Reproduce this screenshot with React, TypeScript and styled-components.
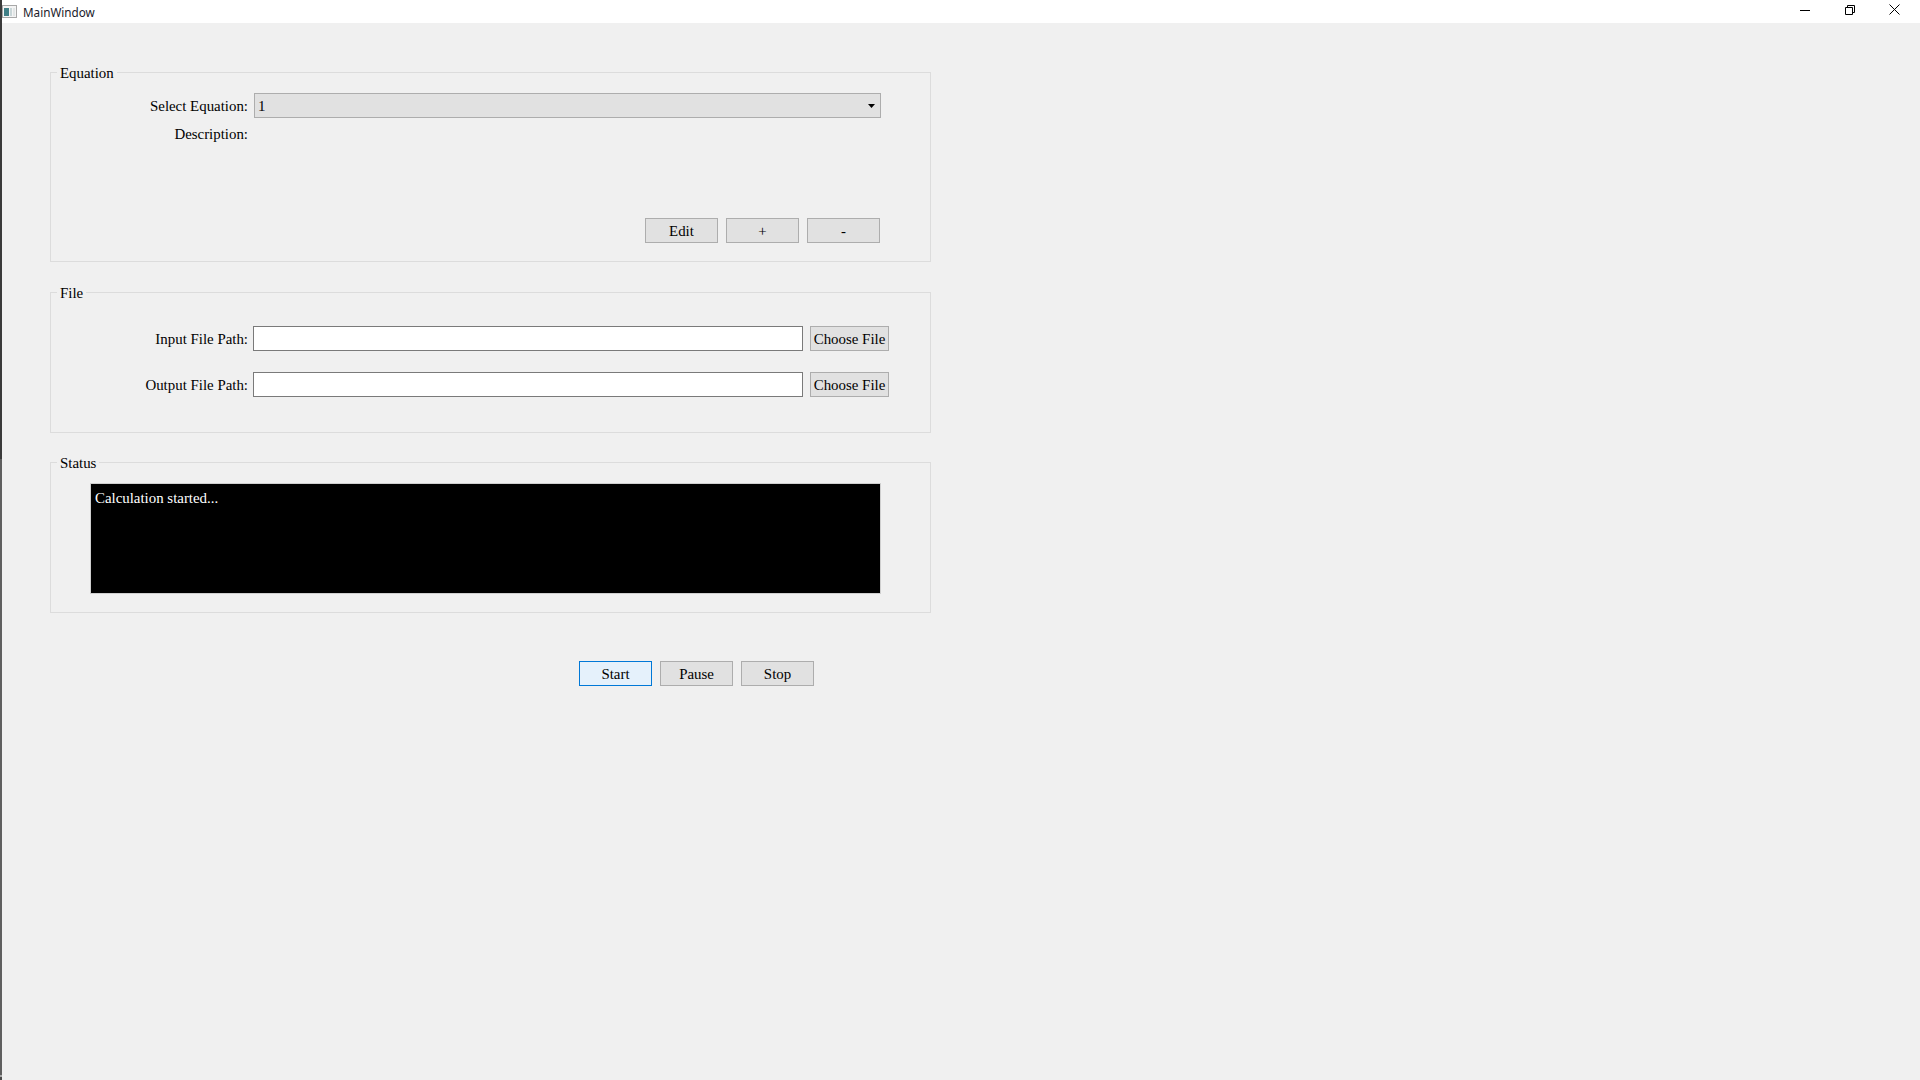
import React from 'react';
import styled, { createGlobalStyle } from 'styled-components';

const GlobalStyle = createGlobalStyle`
  html, body {
    margin: 0;
    height: 100%;
    overflow: hidden;
    background: #f0f0f0;
  }
`;

const Screen = styled.div`
  display: flex;
  width: 1920px;
  height: 1080px;
  font-family: "Liberation Serif", "Times New Roman", serif;
  font-size: 14.9px;
  color: #000;
`;

const EdgeStrip = styled.div`
  width: 2px;
  flex: none;
  background: linear-gradient(
    to bottom,
    #3a3a3a 0,
    #3a3a3a 459px,
    #5f5f5f 459px,
    #5f5f5f 1075px,
    #a8a8a8 1075px,
    #a8a8a8 1077px,
    #4a4a4a 1077px
  );
`;

const Window = styled.div`
  flex: 1;
  display: flex;
  flex-direction: column;
  min-width: 0;
`;

const TitleBar = styled.div`
  height: 23px;
  flex: none;
  display: flex;
  align-items: center;
  background: #fff;
`;

const AppIcon = styled.svg`
  width: 15px;
  height: 15px;
  flex: none;
`;

const WindowTitle = styled.span`
  margin-left: 6px;
  font-family: "Noto Sans", "Liberation Sans", Arial, sans-serif;
  font-size: 11.7px;
  color: #1a1a2a;
`;

const WindowControls = styled.div`
  margin-left: auto;
  margin-right: 3px;
  display: flex;
  align-items: center;
  height: 100%;
`;

const ControlButton = styled.div`
  width: 45px;
  height: 100%;
  display: flex;
  align-items: center;
  justify-content: center;
  padding-bottom: 4px;
  box-sizing: border-box;
`;

const Content = styled.div`
  display: flex;
  flex-direction: column;
  width: 881px;
  margin-left: 48px;
  padding-top: 40px;
`;

const Group = styled.fieldset<{ $height: number; $gap?: number }>`
  height: ${p => p.$height}px;
  box-sizing: border-box;
  margin: 0 0 ${p => p.$gap ?? 0}px;
  padding: 0;
  min-width: 0;
  border: 1px solid #dcdcdc;
  display: block;
`;

const GroupTitle = styled.legend`
  margin-left: 6px;
  padding: 2px 3px 0;
  font-size: 14.9px;
  line-height: 16px;
`;

const FormRow = styled.div<{ $top?: number }>`
  display: flex;
  align-items: center;
  height: 25px;
  margin-top: ${p => p.$top ?? 0}px;
`;

const RowLabel = styled.label<{ $width: number }>`
  width: ${p => p.$width}px;
  flex: none;
  padding-top: 1px;
  text-align: right;
  white-space: nowrap;
`;

const ComboBox = styled.div`
  width: 627px;
  height: 25px;
  margin-left: 6px;
  box-sizing: border-box;
  background: #e1e1e1;
  border: 1px solid #adadad;
  display: flex;
  align-items: center;
  padding: 1px 3px 0;
`;

const ComboArrow = styled.svg`
  margin-left: auto;
  width: 7px;
  height: 4px;
  margin-right: 2px;
  margin-bottom: 1px;
`;

const ButtonRow = styled.div<{ $top: number; $left: number }>`
  display: flex;
  gap: 8px;
  margin-top: ${p => p.$top}px;
  margin-left: ${p => p.$left}px;
`;

const PushButton = styled.button<{ $active?: boolean; $width?: number }>`
  width: ${p => p.$width ?? 73}px;
  height: 25px;
  box-sizing: border-box;
  margin: 0;
  padding: 1px 0 0;
  font: inherit;
  color: #000;
  background: ${p => (p.$active ? '#e5f1fb' : '#e1e1e1')};
  border: 1px solid ${p => (p.$active ? '#0078d7' : '#adadad')};
  border-radius: 0;
`;

const PathInput = styled.input`
  width: 550px;
  height: 25px;
  box-sizing: border-box;
  margin: 0 7px 0 5px;
  padding: 0 3px;
  background: #fff;
  border: 1px solid #7a7a7a;
  border-radius: 0;
  outline: none;
  font: inherit;
`;

const Console = styled.div`
  width: 791px;
  height: 111px;
  margin: 12px 0 0 39px;
  box-sizing: border-box;
  padding: 5px 4px;
  background: #000;
  color: #fff;
  border: 1px solid #cfcfcf;
  line-height: 18px;
`;

const equationButtons = ['Edit', '+', '-'];
const fileRows = [
  { label: 'Input File Path:', top: 25 },
  { label: 'Output File Path:', top: 21 },
];
const runButtons = ['Start', 'Pause', 'Stop'];

const App: React.FC = () => {
  return (
    <Screen>
      <GlobalStyle />
      <EdgeStrip />
      <Window>
        <TitleBar>
          <AppIcon viewBox="0 0 15 15">
            <rect x="0.5" y="1.5" width="14" height="12" fill="#f4f4f4" stroke="#a8a8a8" />
            <rect x="2" y="4" width="5" height="8" fill="#3f7f86" />
            <rect x="8" y="4" width="2" height="8" fill="#c9d6d8" />
            <rect x="11" y="4" width="2" height="8" fill="#e2e6e6" />
          </AppIcon>
          <WindowTitle>MainWindow</WindowTitle>
          <WindowControls>
            <ControlButton>
              <svg width="10" height="10" viewBox="0 0 10 10"><path d="M0 5.5H10" stroke="#000" fill="none" /></svg>
            </ControlButton>
            <ControlButton>
              <svg width="10" height="10" viewBox="0 0 10 10" fill="none" stroke="#000">
                <path d="M0.5 2.5H7.5V9.5H0.5Z" />
                <path d="M2.5 2.5V0.5H9.5V7.5H7.5" />
              </svg>
            </ControlButton>
            <ControlButton>
              <svg width="11" height="11" viewBox="0 0 11 11" fill="none" stroke="#000"><path d="M0.5 0.5L10.5 10.5M10.5 0.5L0.5 10.5" /></svg>
            </ControlButton>
          </WindowControls>
        </TitleBar>
        <Content>
          <Group $height={199} $gap={21}>
            <GroupTitle>Equation</GroupTitle>
            <FormRow $top={12}>
              <RowLabel $width={197}>Select Equation:</RowLabel>
              <ComboBox>
                1
                <ComboArrow viewBox="0 0 7 4"><path d="M0 0H7L3.5 4Z" fill="#000" /></ComboArrow>
              </ComboBox>
            </FormRow>
            <FormRow $top={3}>
              <RowLabel $width={197}>Description:</RowLabel>
            </FormRow>
            <ButtonRow $top={72} $left={594}>
              {equationButtons.map(b => (
                <PushButton key={b}>{b}</PushButton>
              ))}
            </ButtonRow>
          </Group>
          <Group $height={150} $gap={20}>
            <GroupTitle>File</GroupTitle>
            {fileRows.map(row => (
              <FormRow key={row.label} $top={row.top}>
                <RowLabel $width={197}>{row.label}</RowLabel>
                <PathInput type="text" />
                <PushButton $width={79}>Choose File</PushButton>
              </FormRow>
            ))}
          </Group>
          <Group $height={160}>
            <GroupTitle>Status</GroupTitle>
            <Console>Calculation started...</Console>
          </Group>
          <ButtonRow $top={48} $left={529}>
            {runButtons.map((b, i) => (
              <PushButton key={b} $active={i === 0}>{b}</PushButton>
            ))}
          </ButtonRow>
        </Content>
      </Window>
    </Screen>
  );
};

export default App;
